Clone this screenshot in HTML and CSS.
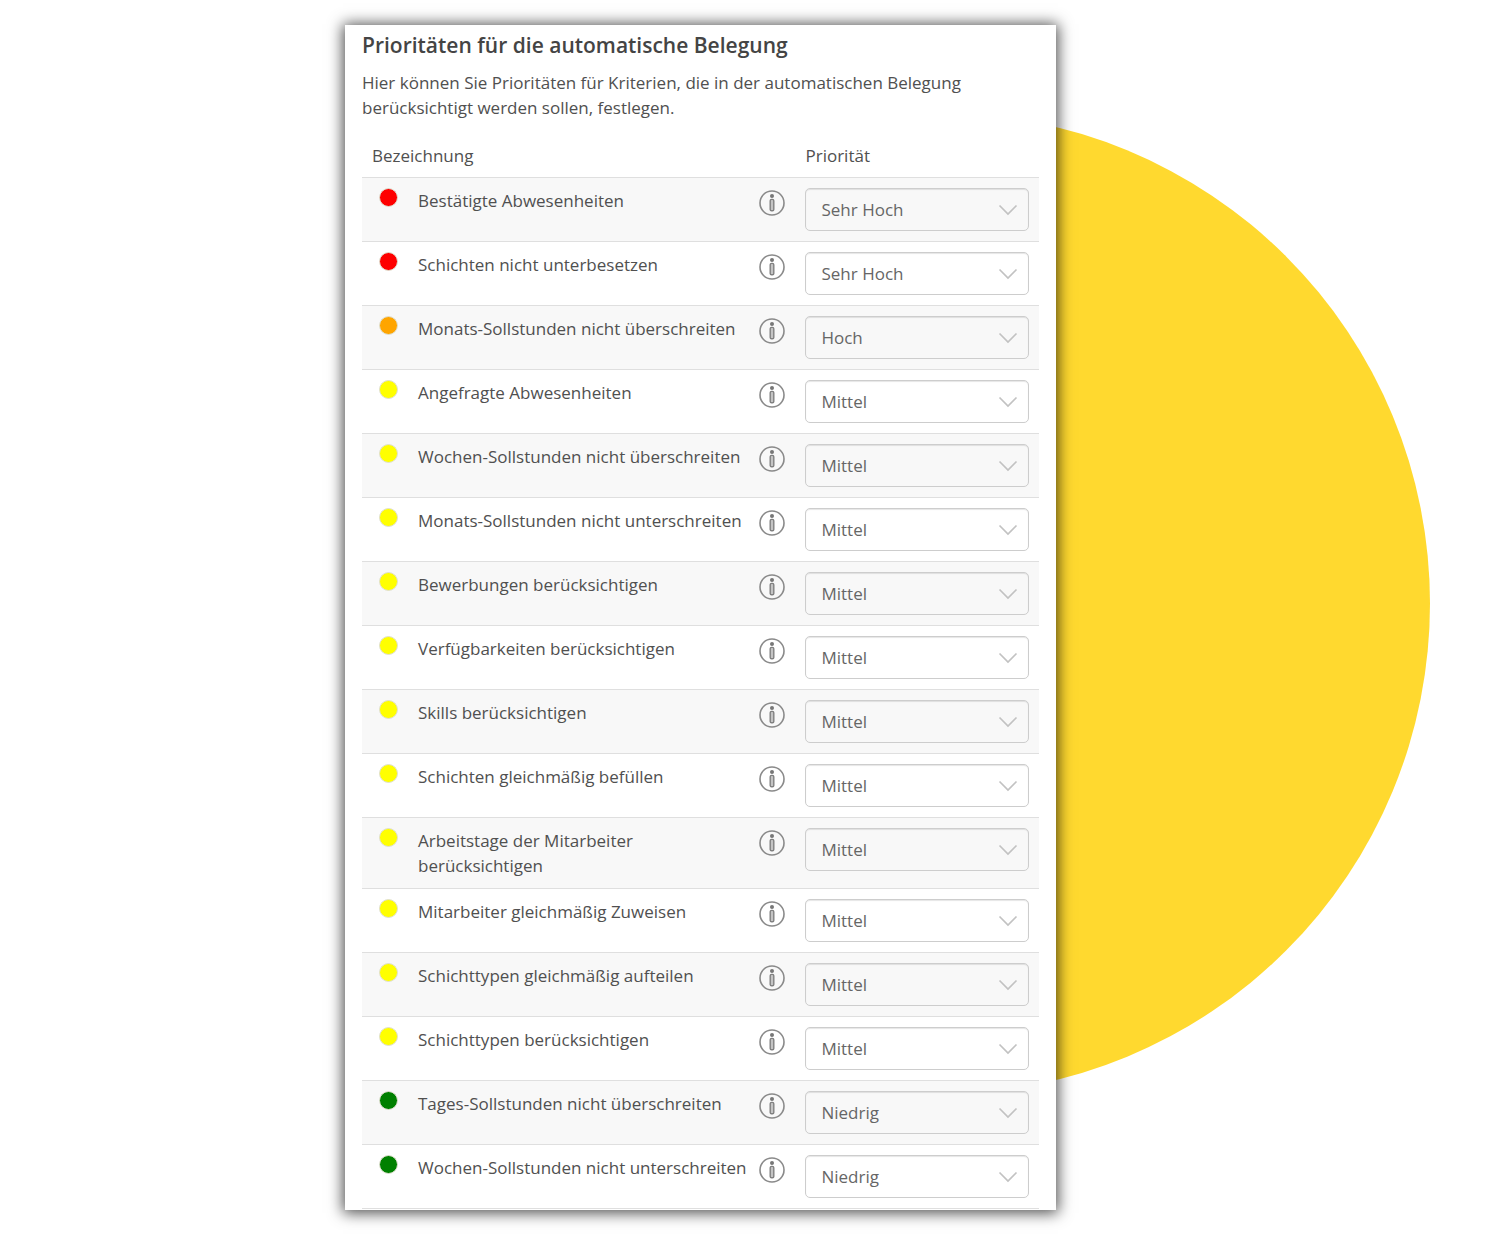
FILE: index.html
```html
<!DOCTYPE html>
<html lang="de">
<head>
<meta charset="utf-8">
<meta name="viewport" content="width=device-width, initial-scale=1">
<title>Prioritäten für die automatische Belegung</title>
<link rel="stylesheet" href="styles.css">
</head>
<body>
<svg class="symbols" aria-hidden="true">
  <symbol id="info" viewBox="0 0 26 26">
    <circle cx="13" cy="13" r="12" fill="none" stroke="#8a8a8a" stroke-width="1.6"/>
    <circle cx="13" cy="6" r="2" fill="#777"/>
    <rect x="11.2" y="9.4" width="3.6" height="11.4" rx="1.4" fill="#c4c4c4" stroke="#808080" stroke-width="1.4"/>
  </symbol>
  <symbol id="chevron" viewBox="0 0 20 12">
    <path d="M1.5 1.5L10 10L18.5 1.5" fill="none" stroke="#c2c2c2" stroke-width="1.7"/>
  </symbol>
</svg>
<main class="stage">
  <div class="frame">
    <div class="disc"></div>
    <section class="card">
      <h1 class="title">Prioritäten für die automatische Belegung</h1>
      <p class="intro">Hier können Sie Prioritäten für Kriterien, die in der automatischen Belegung berücksichtigt werden sollen, festlegen.</p>
      <table class="list">
        <colgroup><col class="col-dot"><col><col class="col-info"><col class="col-select"></colgroup>
        <thead>
          <tr><th class="head-name" colspan="3" scope="col">Bezeichnung</th><th scope="col">Priorität</th></tr>
        </thead>
        <tbody>
          <tr><td class="mark"><span class="dot red"></span></td><td><label for="p1">Bestätigte Abwesenheiten</label></td><td><button class="info" type="button" aria-label="Info"><svg><use href="#info"/></svg></button></td><td><div class="pick"><select id="p1"><option>Sehr Hoch</option></select><svg><use href="#chevron"/></svg></div></td></tr>
          <tr><td class="mark"><span class="dot red"></span></td><td><label for="p2">Schichten nicht unterbesetzen</label></td><td><button class="info" type="button" aria-label="Info"><svg><use href="#info"/></svg></button></td><td><div class="pick"><select id="p2"><option>Sehr Hoch</option></select><svg><use href="#chevron"/></svg></div></td></tr>
          <tr><td class="mark"><span class="dot orange"></span></td><td><label for="p3">Monats-Sollstunden nicht überschreiten</label></td><td><button class="info" type="button" aria-label="Info"><svg><use href="#info"/></svg></button></td><td><div class="pick"><select id="p3"><option>Hoch</option></select><svg><use href="#chevron"/></svg></div></td></tr>
          <tr><td class="mark"><span class="dot yellow"></span></td><td><label for="p4">Angefragte Abwesenheiten</label></td><td><button class="info" type="button" aria-label="Info"><svg><use href="#info"/></svg></button></td><td><div class="pick"><select id="p4"><option>Mittel</option></select><svg><use href="#chevron"/></svg></div></td></tr>
          <tr><td class="mark"><span class="dot yellow"></span></td><td><label for="p5">Wochen-Sollstunden nicht überschreiten</label></td><td><button class="info" type="button" aria-label="Info"><svg><use href="#info"/></svg></button></td><td><div class="pick"><select id="p5"><option>Mittel</option></select><svg><use href="#chevron"/></svg></div></td></tr>
          <tr><td class="mark"><span class="dot yellow"></span></td><td><label for="p6">Monats-Sollstunden nicht unterschreiten</label></td><td><button class="info" type="button" aria-label="Info"><svg><use href="#info"/></svg></button></td><td><div class="pick"><select id="p6"><option>Mittel</option></select><svg><use href="#chevron"/></svg></div></td></tr>
          <tr><td class="mark"><span class="dot yellow"></span></td><td><label for="p7">Bewerbungen berücksichtigen</label></td><td><button class="info" type="button" aria-label="Info"><svg><use href="#info"/></svg></button></td><td><div class="pick"><select id="p7"><option>Mittel</option></select><svg><use href="#chevron"/></svg></div></td></tr>
          <tr><td class="mark"><span class="dot yellow"></span></td><td><label for="p8">Verfügbarkeiten berücksichtigen</label></td><td><button class="info" type="button" aria-label="Info"><svg><use href="#info"/></svg></button></td><td><div class="pick"><select id="p8"><option>Mittel</option></select><svg><use href="#chevron"/></svg></div></td></tr>
          <tr><td class="mark"><span class="dot yellow"></span></td><td><label for="p9">Skills berücksichtigen</label></td><td><button class="info" type="button" aria-label="Info"><svg><use href="#info"/></svg></button></td><td><div class="pick"><select id="p9"><option>Mittel</option></select><svg><use href="#chevron"/></svg></div></td></tr>
          <tr><td class="mark"><span class="dot yellow"></span></td><td><label for="p10">Schichten gleichmäßig befüllen</label></td><td><button class="info" type="button" aria-label="Info"><svg><use href="#info"/></svg></button></td><td><div class="pick"><select id="p10"><option>Mittel</option></select><svg><use href="#chevron"/></svg></div></td></tr>
          <tr><td class="mark"><span class="dot yellow"></span></td><td><label for="p11">Arbeitstage der Mitarbeiter berücksichtigen</label></td><td><button class="info" type="button" aria-label="Info"><svg><use href="#info"/></svg></button></td><td><div class="pick"><select id="p11"><option>Mittel</option></select><svg><use href="#chevron"/></svg></div></td></tr>
          <tr><td class="mark"><span class="dot yellow"></span></td><td><label for="p12">Mitarbeiter gleichmäßig Zuweisen</label></td><td><button class="info" type="button" aria-label="Info"><svg><use href="#info"/></svg></button></td><td><div class="pick"><select id="p12"><option>Mittel</option></select><svg><use href="#chevron"/></svg></div></td></tr>
          <tr><td class="mark"><span class="dot yellow"></span></td><td><label for="p13">Schichttypen gleichmäßig aufteilen</label></td><td><button class="info" type="button" aria-label="Info"><svg><use href="#info"/></svg></button></td><td><div class="pick"><select id="p13"><option>Mittel</option></select><svg><use href="#chevron"/></svg></div></td></tr>
          <tr><td class="mark"><span class="dot yellow"></span></td><td><label for="p14">Schichttypen berücksichtigen</label></td><td><button class="info" type="button" aria-label="Info"><svg><use href="#info"/></svg></button></td><td><div class="pick"><select id="p14"><option>Mittel</option></select><svg><use href="#chevron"/></svg></div></td></tr>
          <tr><td class="mark"><span class="dot green"></span></td><td><label for="p15">Tages-Sollstunden nicht überschreiten</label></td><td><button class="info" type="button" aria-label="Info"><svg><use href="#info"/></svg></button></td><td><div class="pick"><select id="p15"><option>Niedrig</option></select><svg><use href="#chevron"/></svg></div></td></tr>
          <tr><td class="mark"><span class="dot green"></span></td><td><label for="p16">Wochen-Sollstunden nicht unterschreiten</label></td><td><button class="info" type="button" aria-label="Info"><svg><use href="#info"/></svg></button></td><td><div class="pick"><select id="p16"><option>Niedrig</option></select><svg><use href="#chevron"/></svg></div></td></tr>
        </tbody>
      </table>
    </section>
  </div>
</main>
</body>
</html>
```
FILE: styles.css
```css
* { box-sizing: border-box; }

body {
  margin: 0;
  background: #fff;
  color: #505050;
  font: 17px/25px "Open Sans", "Noto Sans", sans-serif;
}

.symbols { display: none; }

.stage {
  padding: 25px 0 40px 23%;
  overflow: hidden;
}

.frame {
  position: relative;
  width: 61.6%;
  min-width: 600px;
}

/* decorative circle behind the card */
.disc {
  position: absolute;
  top: 88px;
  right: -374px;
  width: 981px;
  height: 981px;
  border-radius: 50%;
  background: #ffd92f;
}

.card {
  position: relative;
  padding: 5px 17px 1px;
  background: #fff;
  box-shadow: 0 1px 14px 2px rgba(0, 0, 0, 0.7);
}

.title {
  margin: 0 0 10px;
  color: #444;
  font-size: 21px;
  line-height: 30px;
  font-weight: 600;
}

.intro {
  margin: 0 0 23px;
  max-width: 620px;
}

.list {
  width: 100%;
  table-layout: fixed;
  border-collapse: separate;
  border-spacing: 0;
  border-bottom: 1px solid #dfdfdf;
}

.col-dot { width: 46px; }
.col-info { width: 36px; }
.col-select { width: 244px; }

th {
  padding: 0 10px 9px;
  text-align: left;
  font-weight: 400;
}

td {
  padding: 10px 10px;
  border-top: 1px solid #dfdfdf;
  vertical-align: top;
}

td:nth-child(3) { padding: 12px 0 0; }

td.mark { padding: 10px 0 0 17px; }

tbody tr:nth-child(odd) { background: #f8f8f8; }

label { display: block; }

.dot {
  display: block;
  width: 19px;
  height: 19px;
  border: 1px solid #e0e0d0;
  border-radius: 50%;
}

.red { background: #fe0000; }
.orange { background: #ffa500; }
.yellow { background: #ffff00; }
.green { background: #008000; }

.info {
  display: block;
  padding: 0;
  border: 0;
  background: none;
}

.info svg {
  display: block;
  width: 26px;
  height: 26px;
}

.pick {
  display: grid;
  align-items: center;
}

.pick select,
.pick svg { grid-area: 1 / 1; }

.pick select {
  width: 100%;
  height: 43px;
  padding: 0 15px;
  appearance: none;
  border: 1px solid #cdcdcd;
  border-radius: 5px;
  background: transparent;
  box-shadow: inset 0 1px 1px rgba(0, 0, 0, 0.1);
  color: #666;
  font: inherit;
}

.pick svg {
  justify-self: end;
  width: 20px;
  height: 12px;
  margin-right: 11px;
  pointer-events: none;
}
```
